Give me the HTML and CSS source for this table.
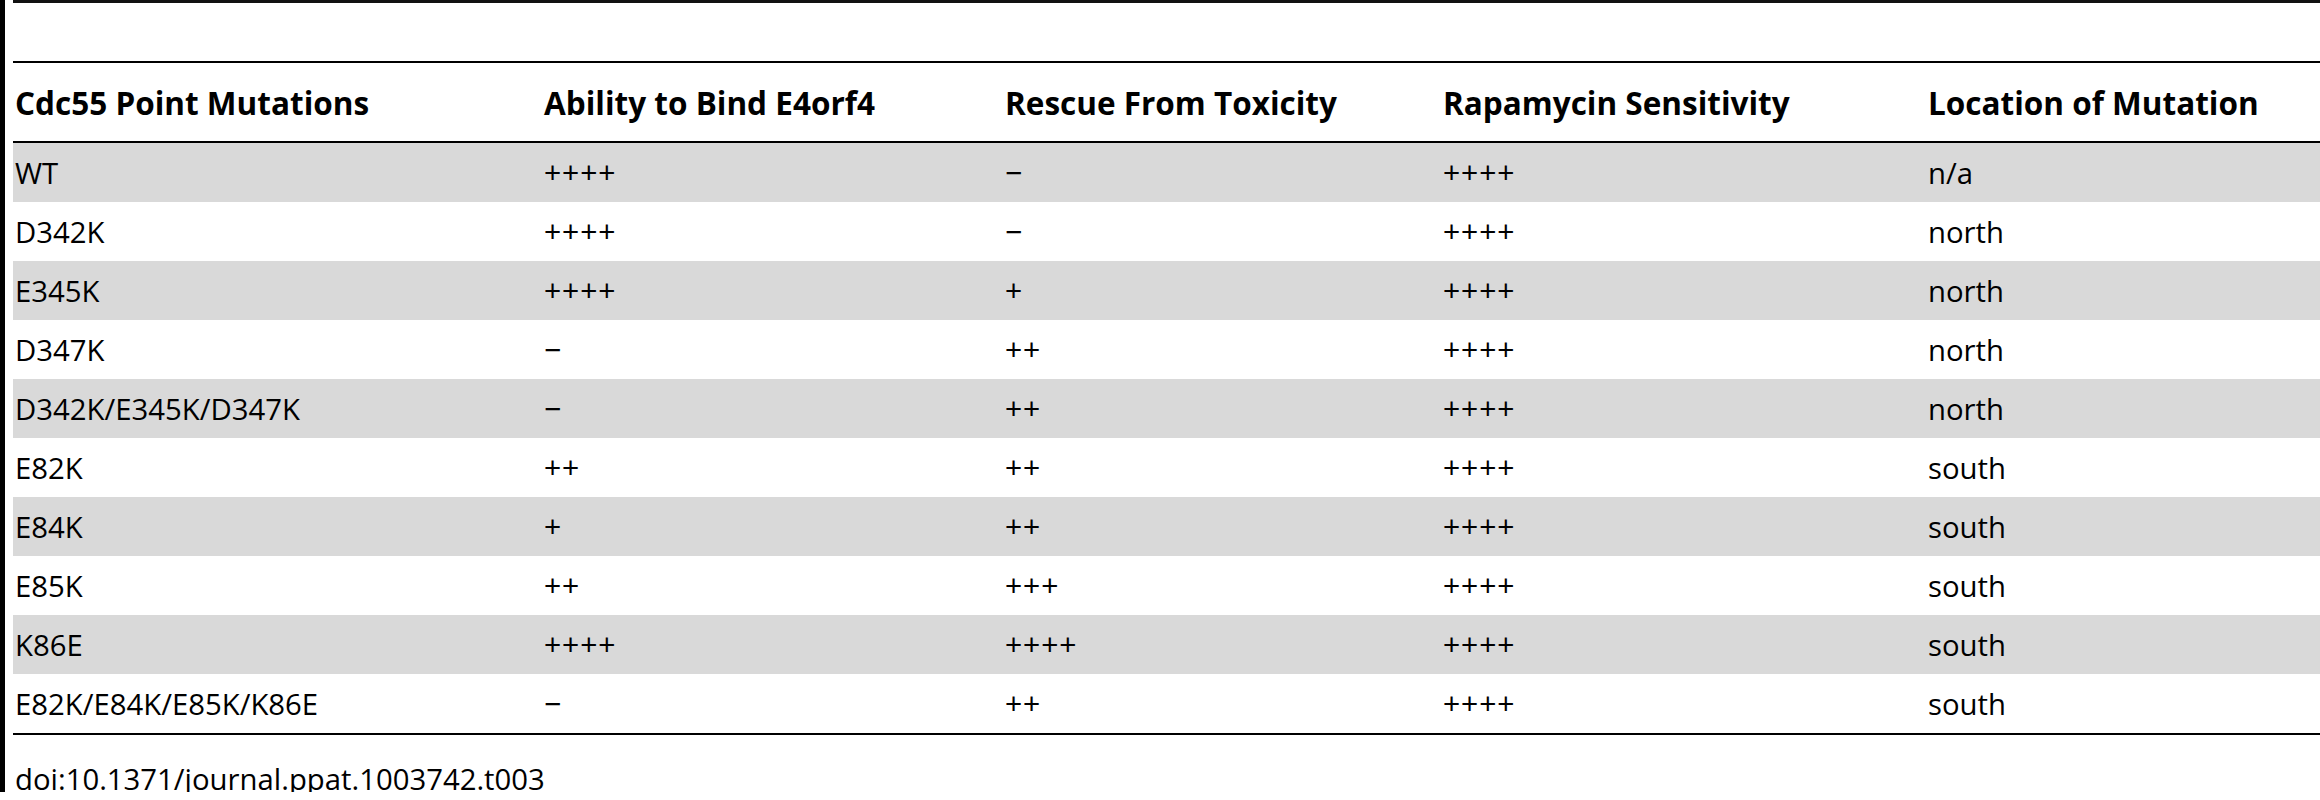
FILE: index.html
```html
<!DOCTYPE html>
<html lang="en">
<head>
<meta charset="utf-8">
<title>Cdc55 Point Mutations</title>
<link rel="stylesheet" href="styles.css">
</head>
<body>
<div class="page">
  <div class="topbar"></div>
  <table class="data">
    <colgroup>
      <col class="c1"><col class="c2"><col class="c3"><col class="c4"><col class="c5">
    </colgroup>
    <thead>
      <tr>
        <th>Cdc55 Point Mutations</th>
        <th>Ability to Bind E4orf4</th>
        <th>Rescue From Toxicity</th>
        <th>Rapamycin Sensitivity</th>
        <th>Location of Mutation</th>
      </tr>
    </thead>
    <tbody>
      <tr class="alt"><td>WT</td><td class="sym">++++</td><td class="sym">−</td><td class="sym">++++</td><td>n/a</td></tr>
      <tr><td>D342K</td><td class="sym">++++</td><td class="sym">−</td><td class="sym">++++</td><td>north</td></tr>
      <tr class="alt"><td>E345K</td><td class="sym">++++</td><td class="sym">+</td><td class="sym">++++</td><td>north</td></tr>
      <tr><td>D347K</td><td class="sym">−</td><td class="sym">++</td><td class="sym">++++</td><td>north</td></tr>
      <tr class="alt"><td>D342K/E345K/D347K</td><td class="sym">−</td><td class="sym">++</td><td class="sym">++++</td><td>north</td></tr>
      <tr><td>E82K</td><td class="sym">++</td><td class="sym">++</td><td class="sym">++++</td><td>south</td></tr>
      <tr class="alt"><td>E84K</td><td class="sym">+</td><td class="sym">++</td><td class="sym">++++</td><td>south</td></tr>
      <tr><td>E85K</td><td class="sym">++</td><td class="sym">+++</td><td class="sym">++++</td><td>south</td></tr>
      <tr class="alt"><td>K86E</td><td class="sym">++++</td><td class="sym">++++</td><td class="sym">++++</td><td>south</td></tr>
      <tr><td>E82K/E84K/E85K/K86E</td><td class="sym">−</td><td class="sym">++</td><td class="sym">++++</td><td>south</td></tr>
    </tbody>
  </table>
  <p class="doi">doi:10.1371/journal.ppat.1003742.t003</p>
</div>
</body>
</html>
```

FILE: styles.css
```css
html, body {
  margin: 0;
  padding: 0;
  background: #fff;
}

body {
  font-family: "Open Sans", "Noto Sans", "Liberation Sans", sans-serif;
  color: #000;
}

.page {
  border-left: 5px solid #000;
  padding-left: 8px;
  width: 2307px;
  height: 792px;
  box-sizing: content-box;
}

.topbar {
  height: 3px;
  background: #111;
  margin-bottom: 58px;
}

.data {
  width: 2307px;
  table-layout: fixed;
  border-collapse: collapse;
  border-top: 2px solid #000;
  border-bottom: 2px solid #000;
  font-size: 29.3px;
}

.c1 { width: 529px; }
.c2 { width: 461px; }
.c3 { width: 438px; }
.c4 { width: 485px; }
.c5 { width: 394px; }

.data th {
  font-weight: 700;
  font-size: 31.5px;
  text-align: left;
  height: 78px;
  padding: 0 0 0 2px;
  border-bottom: 2px solid #000;
  vertical-align: middle;
  white-space: nowrap;
}

.data td {
  height: 59px;
  padding: 0 0 0 2px;
  vertical-align: middle;
  white-space: nowrap;
}

.data td.sym {
  font-family: "Liberation Sans", "Open Sans", sans-serif;
  letter-spacing: 1px;
}

.data tr.alt td {
  background: #d9d9d9;
}

.doi {
  margin: 31px 0 0 0;
  padding-left: 2px;
  font-size: 29.3px;
  line-height: 26px;
}
```
